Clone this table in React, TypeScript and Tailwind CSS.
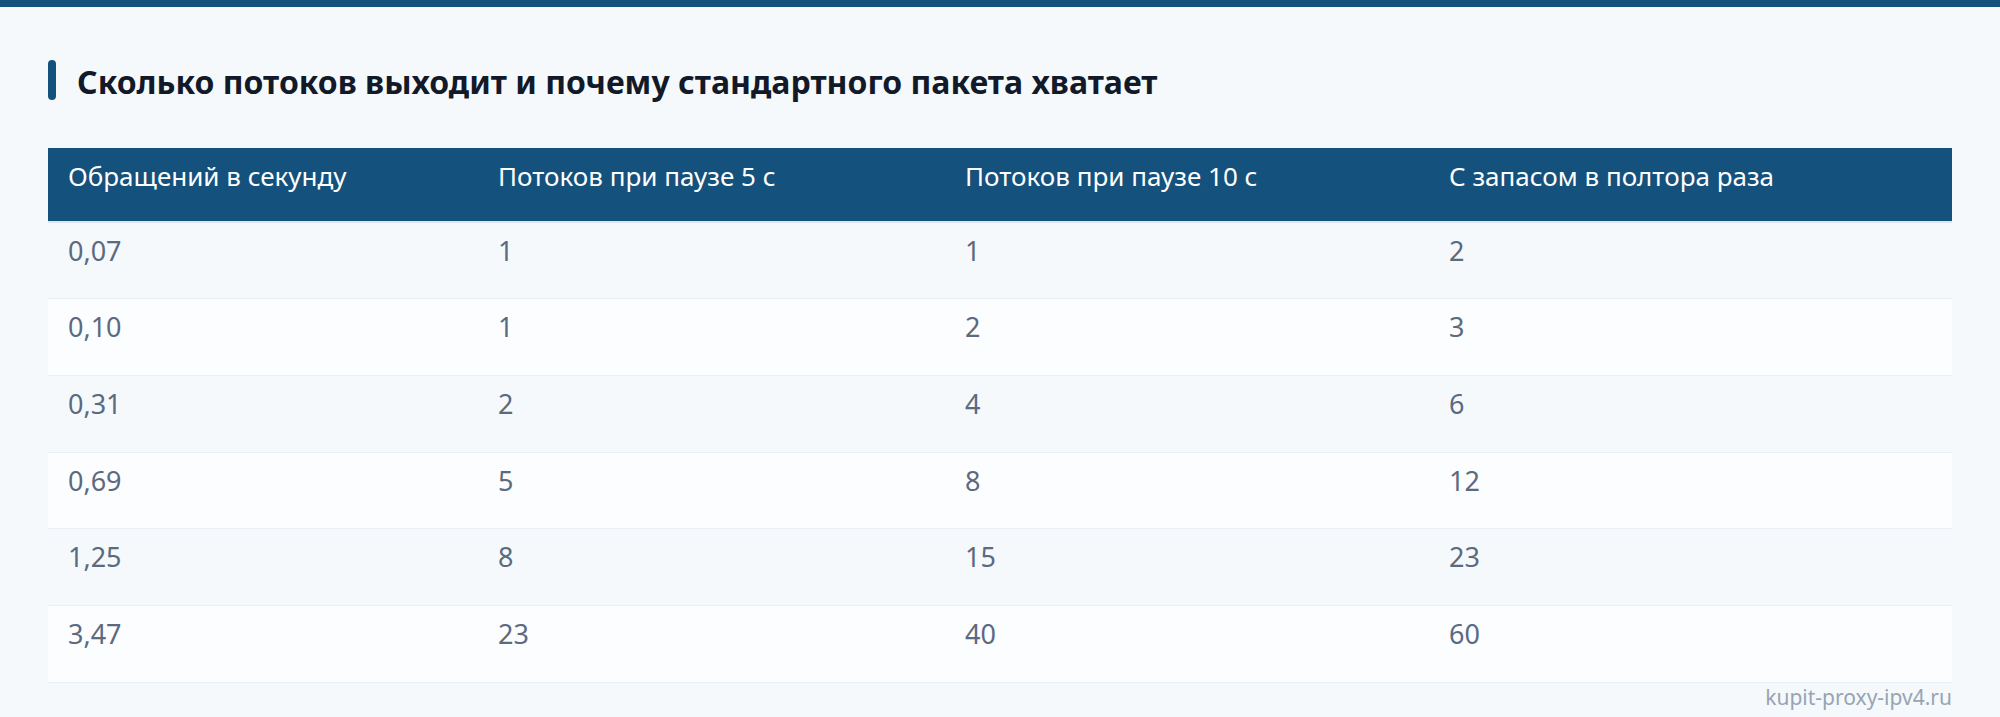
import React from 'react';

const headers = [
  'Обращений в секунду',
  'Потоков при паузе 5 с',
  'Потоков при паузе 10 с',
  'С запасом в полтора раза',
];

const rows = [
  ['0,07', '1', '1', '2'],
  ['0,10', '1', '2', '3'],
  ['0,31', '2', '4', '6'],
  ['0,69', '5', '8', '12'],
  ['1,25', '8', '15', '23'],
  ['3,47', '23', '40', '60'],
];

const colWidths = ['w-[430px]', 'w-[467px]', 'w-[484px]', 'w-[523px]'];

const App = () => {
  return (
    <div className="min-h-[717px] bg-[#f5f9fc] font-['Noto_Sans',sans-serif]">
      <div className="h-[7px] bg-[#14517c]" />

      <div className="px-12 pt-[53px]">
        <div className="flex items-center gap-[21px]">
          <span className="h-10 w-2 rounded-full bg-[#14517c]" />
          <h2 className="pt-[3px] text-[32px] leading-[37px] font-bold text-[#121a2a]">
            Сколько потоков выходит и почему стандартного пакета хватает
          </h2>
        </div>

        <table className="mt-12 w-full border-collapse">
          <thead>
            <tr className="bg-[#14517c] border-b-2 border-[#dde5ee]">
              {headers.map((h, i) => (
                <th
                  key={h}
                  className={`${colWidths[i]} h-[74px] px-5 pt-[9px] align-top text-left text-[26px] leading-[39px] font-normal text-white`}
                >
                  {h}
                </th>
              ))}
            </tr>
          </thead>
          <tbody>
            {rows.map((r, ri) => (
              <tr
                key={ri}
                className={`border-b border-[#e9eff5] ${ri % 2 === 1 ? 'bg-[#fcfdfe]' : 'bg-[#f5f9fc]'}`}
              >
                {r.map((c, ci) => (
                  <td
                    key={ci}
                    className="h-[76.7px] px-5 pt-2 align-top text-[27px] leading-[40px] text-[#5b6a80]"
                  >
                    {c}
                  </td>
                ))}
              </tr>
            ))}
          </tbody>
        </table>

        <div className="text-right text-[21px] leading-7 text-[#97a4b5]">
          kupit-proxy-ipv4.ru
        </div>
      </div>
    </div>
  );
};

export default App;
